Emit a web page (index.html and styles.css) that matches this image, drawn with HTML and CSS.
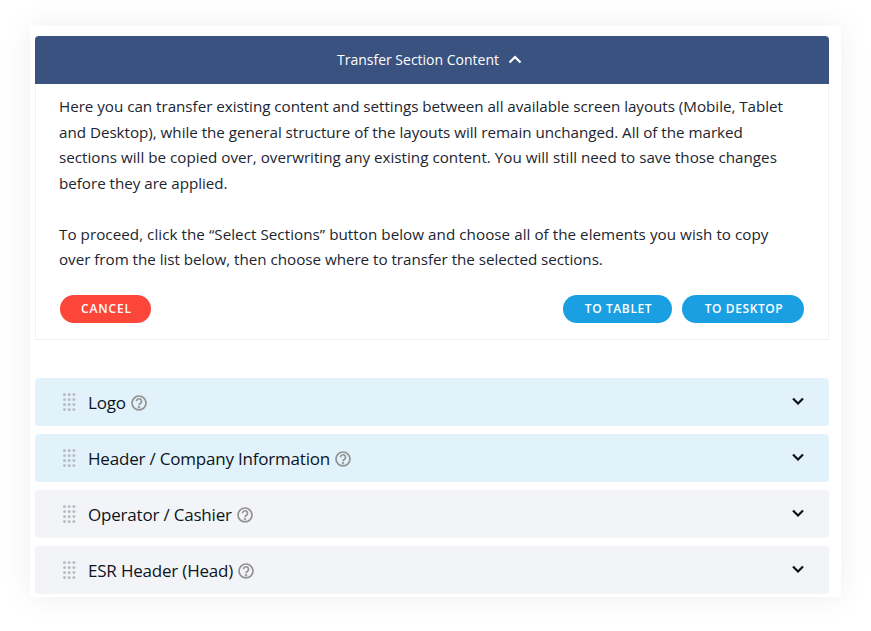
FILE: index.html
```html
<!DOCTYPE html>
<html lang="en">
<head>
<meta charset="utf-8">
<title>Transfer Section Content</title>
<link rel="stylesheet" href="styles.css">
</head>
<body>
<main class="card">
  <section class="transfer">
    <header class="transfer-head">
      <span>Transfer Section Content</span>
      <svg class="head-chevron" viewBox="0 0 14 9" width="14" height="9"><path d="M1.500 7.500 7 2l5.500 5.500" fill="none" stroke="#fff" stroke-width="2.200"/></svg>
    </header>
    <div class="transfer-body">
      <p class="copy">Here you can transfer existing content and settings between all available screen layouts (Mobile, Tablet<br>and Desktop), while the general structure of the layouts will remain unchanged. All of the marked<br><span class="line-loose">sections will be copied over, overwriting any existing content. You will still need to save those changes</span><br>before they are applied.</p>
      <p class="copy"><span class="line-looser">To proceed, click the “Select Sections” button below and choose all of the elements you wish to copy</span><br>over from the list below, then choose where to transfer the selected sections.</p>
      <div class="actions">
        <button class="btn btn-cancel">CANCEL</button>
        <div class="actions-right">
          <button class="btn btn-primary btn-tablet">TO TABLET</button>
          <button class="btn btn-primary btn-desktop">TO DESKTOP</button>
        </div>
      </div>
    </div>
  </section>
  <section class="rows">
    <div class="row row-blue">
      <svg class="grip" viewBox="0 0 14 18" width="14" height="18"><use href="#dots"/></svg>
      <span class="row-title">Logo</span>
      <svg class="help" viewBox="0 0 16 16" width="16" height="16"><use href="#q"/></svg>
      <svg class="chevron" viewBox="0 0 12 8" width="12" height="8"><use href="#down"/></svg>
    </div>
    <div class="row row-blue">
      <svg class="grip" viewBox="0 0 14 18" width="14" height="18"><use href="#dots"/></svg>
      <span class="row-title">Header / Company Information</span>
      <svg class="help" viewBox="0 0 16 16" width="16" height="16"><use href="#q"/></svg>
      <svg class="chevron" viewBox="0 0 12 8" width="12" height="8"><use href="#down"/></svg>
    </div>
    <div class="row row-grey">
      <svg class="grip" viewBox="0 0 14 18" width="14" height="18"><use href="#dots"/></svg>
      <span class="row-title">Operator / Cashier</span>
      <svg class="help" viewBox="0 0 16 16" width="16" height="16"><use href="#q"/></svg>
      <svg class="chevron" viewBox="0 0 12 8" width="12" height="8"><use href="#down"/></svg>
    </div>
    <div class="row row-grey">
      <svg class="grip" viewBox="0 0 14 18" width="14" height="18"><use href="#dots"/></svg>
      <span class="row-title">ESR Header (Head)</span>
      <svg class="help" viewBox="0 0 16 16" width="16" height="16"><use href="#q"/></svg>
      <svg class="chevron" viewBox="0 0 12 8" width="12" height="8"><use href="#down"/></svg>
    </div>
  </section>
</main>
<svg class="defs" width="0" height="0" aria-hidden="true">
  <defs>
    <g id="dots" fill="#b9bdc3">
      <circle cx="1.500" cy="1.500" r="1.500"/><circle cx="6.200" cy="1.500" r="1.500"/><circle cx="10.900" cy="1.500" r="1.500"/>
      <circle cx="1.500" cy="6.500" r="1.500"/><circle cx="6.200" cy="6.500" r="1.500"/><circle cx="10.900" cy="6.500" r="1.500"/>
      <circle cx="1.500" cy="11.500" r="1.500"/><circle cx="6.200" cy="11.500" r="1.500"/><circle cx="10.900" cy="11.500" r="1.500"/>
      <circle cx="1.500" cy="16.500" r="1.500"/><circle cx="6.200" cy="16.500" r="1.500"/><circle cx="10.900" cy="16.500" r="1.500"/>
    </g>
    <g id="q" fill="none" stroke="#929292" stroke-width="1.700">
      <circle cx="8" cy="8" r="7"/>
      <path d="M5.500 6.300a2.500 2.500 0 1 1 3.800 2.100c-.9.500-1.300 1-1.300 1.800"/>
      <circle cx="8" cy="12.200" r=".4" fill="#929292"/>
    </g>
    <path id="down" d="M1 1.500l5 5 5-5" fill="none" stroke="#10141a" stroke-width="2.200"/>
  </defs>
</svg>
</body>
</html>
```
FILE: styles.css
```css
html, body {
  margin: 0;
  padding: 0;
  background: #fff;
}
body {
  width: 871px;
  height: 631px;
  overflow: hidden;
  padding: 26px 30px 0;
  box-sizing: border-box;
  font-family: "Open Sans", "Noto Sans", sans-serif;
  color: #1c2530;
}
.card {
  width: 811px;
  height: 571px;
  box-sizing: border-box;
  padding: 10px 12px 0 5px;
  background: #fff;
  box-shadow: 0 0 30px rgba(0, 0, 0, 0.07);
}
.transfer-head {
  height: 48px;
  padding: 0 5px 2px 0;
  box-sizing: border-box;
  display: flex;
  align-items: center;
  justify-content: center;
  gap: 9px;
  background: #3a527f;
  border-radius: 4px 4px 0 0;
  color: #fff;
  font-size: 14px;
}
.transfer-body {
  height: 256px;
  box-sizing: border-box;
  padding: 10px 23px 0;
  border: 1px solid #f2f2f2;
  border-top: 0;
}
.copy {
  margin: 0 0 25.600px;
  font-size: 15.200px;
  letter-spacing: -0.025px;
  line-height: 25.500px;
  white-space: nowrap;
}
.line-loose {
  letter-spacing: 0.004px;
}
.line-looser {
  letter-spacing: 0.045px;
}
.actions {
  display: flex;
  justify-content: space-between;
  margin: -3px 1px 0;
}
.actions-right {
  display: flex;
  gap: 10px;
}
.btn {
  height: 28px;
  padding: 0 0 2px 2px;
  border: 0;
  border-radius: 14px;
  color: #fff;
  font-family: inherit;
  font-size: 12px;
  font-weight: 600;
  letter-spacing: 0.850px;
}
.btn-cancel {
  width: 91px;
  background: #fb4639;
}
.btn-primary {
  background: #199fe2;
  letter-spacing: 0.600px;
}
.btn-tablet {
  width: 109px;
}
.btn-desktop {
  width: 122px;
}
.rows {
  margin-top: 38px;
  display: flex;
  flex-direction: column;
  gap: 8px;
}
.row {
  height: 48px;
  display: flex;
  align-items: center;
  padding: 0 25px 0 28px;
  border-radius: 4px;
  color: #0c1420;
}
.row-blue {
  background: #e1f2fb;
}
.row-grey {
  background: #f3f4f8;
}
.grip {
  margin-right: 11px;
}
.row-title {
  font-size: 17px;
  letter-spacing: -0.200px;
}
.help {
  margin-left: 5px;
  margin-top: 2px;
}
.chevron {
  margin-left: auto;
  margin-top: -2px;
}
.defs {
  position: absolute;
}
```
